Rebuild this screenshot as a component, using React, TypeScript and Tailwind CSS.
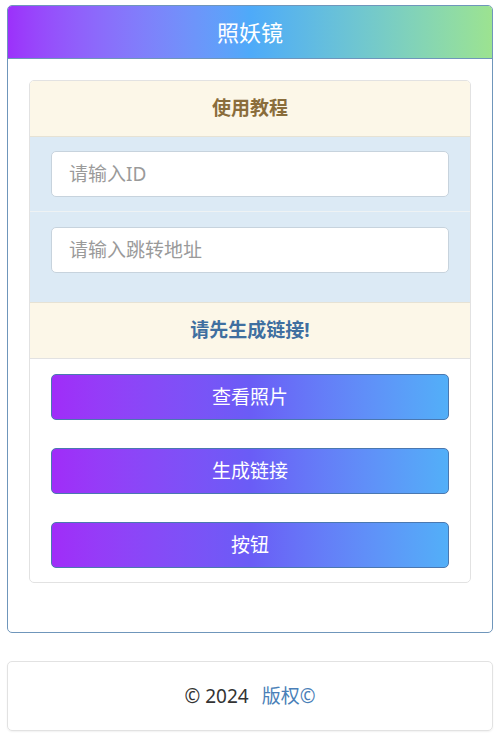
import React from "react";

const font = { fontFamily: '"Noto Sans", "Noto Sans CJK SC", sans-serif' };

function GradButton({ label }: { label: string }) {
  return (
    <button className="h-[46px] w-full rounded-[5px] border border-[#4a78b0] bg-gradient-to-r from-[#a02cf8] via-[#6a5cf6] to-[#52aff8] text-[19px] text-white">
      {label}
    </button>
  );
}

export default function App() {
  return (
    <div className="min-h-[736px] bg-white pl-[7px] pr-[4px] pt-[5px]" style={font}>
      <div className="overflow-hidden rounded-[5px] border border-[#6f96bb]">
        <div className="flex h-[53px] items-center justify-center border-b border-[#6f96bb] bg-gradient-to-r from-[#9c30fb] via-[#4eaaf9] to-[#9ce390] text-[22px] text-white">
          照妖镜
        </div>
        <div className="px-[21px] pb-[49px] pt-[21px]">
          <div className="overflow-hidden rounded-[5px] border border-[#e2e2e2]">
            <div className="flex h-[56px] items-center justify-center border-b border-[#e6e2d4] bg-[#fcf7e8] text-[19px] font-bold text-[#8a6d3b]">
              使用教程
            </div>
            <div className="border-b border-[#eef2f4] bg-[#dceaf5] px-[21px] pb-[14px] pt-[14px]">
              <input
                placeholder="请输入ID"
                className="h-[46px] w-full rounded-[5px] border border-[#c7d3dd] bg-white px-[17px] text-[19px] text-[#555] outline-none placeholder:text-[#9a9a9a]"
              />
            </div>
            <div className="border-b border-[#e6e2d4] bg-[#dceaf5] px-[21px] pb-[29px] pt-[15px]">
              <input
                placeholder="请输入跳转地址"
                className="h-[46px] w-full rounded-[5px] border border-[#c7d3dd] bg-white px-[17px] text-[19px] text-[#555] outline-none placeholder:text-[#9a9a9a]"
              />
            </div>
            <div className="flex h-[56px] items-center justify-center border-b border-[#e2e2e2] bg-[#fcf7e8] text-[19px] font-bold text-[#3f6fa0]">
              请先生成链接!
            </div>
            <div className="flex flex-col gap-[28px] px-[21px] pb-[14px] pt-[15px]">
              <GradButton label="查看照片" />
              <GradButton label="生成链接" />
              <GradButton label="按钮" />
            </div>
          </div>
        </div>
      </div>
      <div className="mt-[28px] flex h-[70px] items-center justify-center rounded-[5px] border border-[#e2e2e2] text-[19px] shadow-[0_1px_2px_rgba(0,0,0,0.06)]">
        <span className="text-[#333]">© 2024</span>
        <span className="ml-[13px] text-[#4a7fb8]">版权©</span>
      </div>
    </div>
  );
}
